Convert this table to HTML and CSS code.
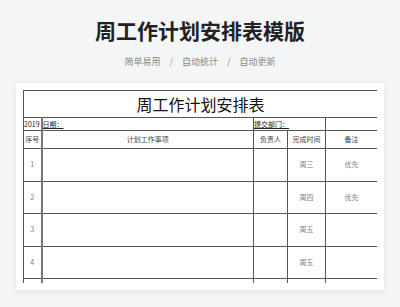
FILE: index.html
```html
<!DOCTYPE html>
<html lang="zh-CN">
<head>
<meta charset="utf-8">
<link rel="stylesheet" href="styles.css">
</head>
<body>
<header class="hero">
  <h1 class="hero-title">周工作计划安排表模版</h1>
  <div class="hero-tags">
    <span>简单易用</span><span class="sep">/</span><span>自动统计</span><span class="sep">/</span><span>自动更新</span>
  </div>
</header>
<main class="card">
  <div class="sheet">
    <table class="plan">
      <colgroup>
        <col class="c-no"><col class="c-task"><col class="c-owner"><col class="c-time"><col class="c-note">
      </colgroup>
      <tr class="r-title"><td colspan="5" class="sheet-title">周工作计划安排表</td></tr>
      <tr class="r-meta">
        <td class="meta-year">2019</td>
        <td class="meta-left"><u>日期：</u></td>
        <td colspan="2" class="meta-left"><u>提交部门：</u></td>
        <td></td>
      </tr>
      <tr class="r-head">
        <td>序号</td><td>计划工作事项</td><td>负责人</td><td>完成时间</td><td>备注</td>
      </tr>
      <tr class="r-data"><td>1</td><td></td><td></td><td>周三</td><td>优先</td></tr>
      <tr class="r-data"><td>2</td><td></td><td></td><td>周四</td><td>优先</td></tr>
      <tr class="r-data"><td>3</td><td></td><td></td><td>周五</td><td></td></tr>
      <tr class="r-data"><td>4</td><td></td><td></td><td>周五</td><td></td></tr>
      <tr class="r-data"><td></td><td></td><td></td><td></td><td></td></tr>
    </table>
  </div>
</main>
</body>
</html>
```

FILE: styles.css
```css
html, body {
  margin: 0;
  padding: 0;
}
body {
  background: #f4f5f7;
  font-family: "Noto Sans CJK SC", "Noto Sans", sans-serif;
  width: 400px;
  height: 307px;
  overflow: hidden;
}
.hero {
  display: flex;
  flex-direction: column;
  align-items: center;
  padding-top: 16px;
}
.hero-title {
  margin: 0;
  font-size: 21px;
  line-height: 28px;
  font-weight: 700;
  color: #222;
}
.hero-tags {
  margin-top: 11px;
  display: flex;
  gap: 9px;
  font-size: 9px;
  line-height: 14px;
  color: #888;
}
.sep {
  color: #999;
}
.card {
  margin: 14px 16px 0;
  background: #fff;
  padding: 7px 7px 7px;
  box-shadow: 0 2px 6px rgba(0, 0, 0, 0.08);
}
.sheet {
  height: 193px;
  overflow: hidden;
}
.plan {
  width: 354px;
  border-collapse: collapse;
  table-layout: fixed;
  font-size: 7px;
  line-height: 9px;
}
.c-no { width: 18px; }
.c-task { width: 212px; }
.c-owner { width: 34px; }
.c-time { width: 38px; }
.c-note { width: 52px; }
.plan td {
  border: 1px solid #555;
  padding: 0;
  text-align: center;
  color: #808080;
  overflow: hidden;
  white-space: nowrap;
}
.plan td:first-child {
  border-right: 2px solid #777;
}
.r-title td {
  height: 26px;
  font-size: 16px;
  line-height: 20px;
  color: #111;
}
.r-title td:first-child {
  border-right: 1px solid #555;
}
.r-meta td {
  height: 12px;
  color: #222;
}
.meta-year {
  text-align: left !important;
}
.meta-left {
  text-align: left !important;
}
.r-head td {
  height: 17px;
  color: #444;
}
.r-data td {
  height: 31.5px;
}
```
